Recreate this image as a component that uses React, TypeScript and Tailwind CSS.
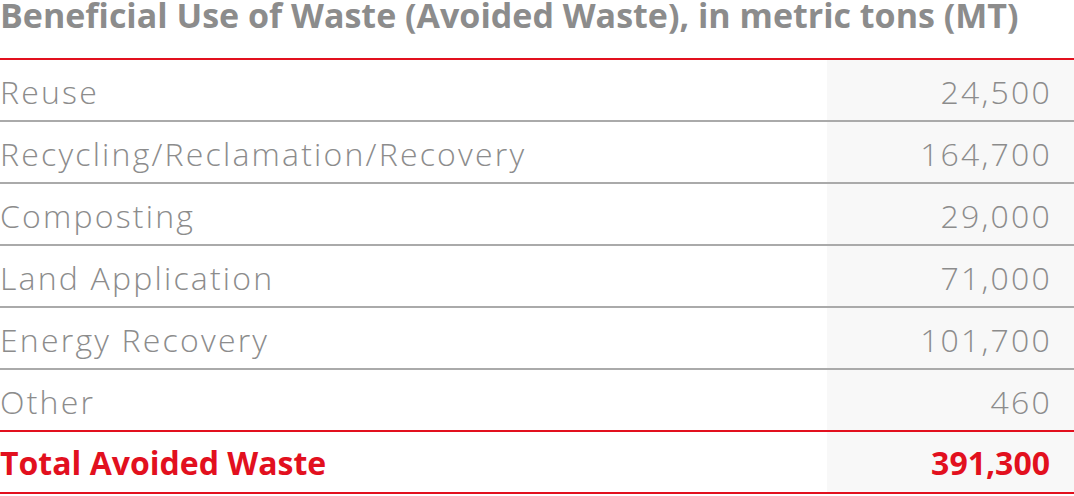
import React from "react";

const rows = [
  ["Reuse", "24,500"],
  ["Recycling/Reclamation/Recovery", "164,700"],
  ["Composting", "29,000"],
  ["Land Application", "71,000"],
  ["Energy Recovery", "101,700"],
  ["Other", "460"],
];

export default function App() {
  return (
    <div className="w-[1074px] h-[496px] bg-white overflow-hidden font-['Open_Sans','Liberation_Sans',sans-serif]">
      <div className="h-[58px] text-[34px] font-bold text-[#8c8c8c] leading-[31px] whitespace-nowrap">
        Beneficial Use of Waste (Avoided Waste), in metric tons (MT)
      </div>
      <div className="border-t-2 border-[#e2101e]">
        {rows.map(([label, value], i) => (
          <div
            key={label}
            className={
              i === rows.length - 1
                ? "flex h-[62px] border-b-2 border-[#e2101e]"
                : "flex h-[62px] border-b-2 border-[#aaaaaa]"
            }
          >
            <div className="flex-1 flex items-center pt-[3px] text-[32px] font-light tracking-[2.2px] text-[#8c8c8c] whitespace-nowrap">
              {label}
            </div>
            <div className="w-[247px] bg-[#f8f8f8] flex items-center justify-end pt-[3px] pr-[22px] text-[32px] font-light tracking-[2.2px] text-[#8c8c8c]">
              {value}
            </div>
          </div>
        ))}
        <div className="flex h-[62px] border-b-2 border-[#e2101e]">
          <div className="flex-1 flex items-center pt-[2px] text-[32px] font-bold text-[#e2101e] whitespace-nowrap">
            Total Avoided Waste
          </div>
          <div className="w-[247px] bg-[#f8f8f8] flex items-center justify-end pt-[2px] pr-[24px] text-[32px] font-bold text-[#e2101e]">
            391,300
          </div>
        </div>
      </div>
    </div>
  );
}
